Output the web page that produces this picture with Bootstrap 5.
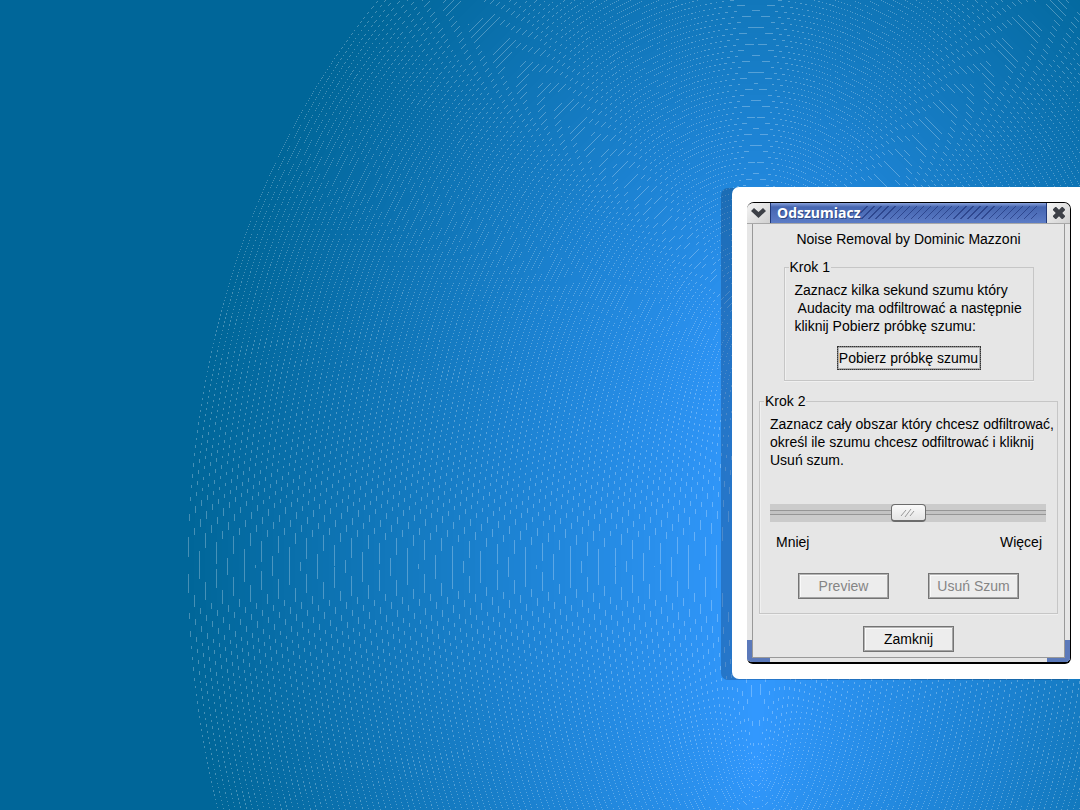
<!DOCTYPE html>
<html lang="pl">
<head>
<meta charset="utf-8">
<meta name="viewport" content="width=device-width, initial-scale=1">
<title>Odszumiacz</title>
<link href="https://cdn.jsdelivr.net/npm/bootstrap@5.3.0/dist/css/bootstrap.min.css" rel="stylesheet">
<style>
body{background:#069;color:#000;font:14px/18px "Liberation Sans",Arial,sans-serif}
.backdrop{z-index:-1}
.sheet{width:348px;margin-top:187px;padding:15px 9px 15px 15px;background:#fff;border-radius:7px 0 0 7px;box-shadow:-11px 1px 0 rgba(15,45,90,.3)}
.dialog{background:#e6e6e6;border:solid #000;border-width:1px 1px 2px 0;border-radius:7px 7px 6px 6px;overflow:hidden}
.titlebar{height:21px;border-bottom:1px solid #a8a8a8}
.titlebar h1{margin:0;padding-left:6px;color:#fff;font:bold 14px/20px "Open Sans","Noto Sans",sans-serif;text-shadow:1px 1px 0 #2c4680;border:solid #203878;border-width:0 1px;
 background:repeating-linear-gradient(135deg,transparent 0 4px,rgba(25,45,115,.6) 4px 5px) 90px 3px/176px 13px no-repeat,linear-gradient(#8aa3dc 0,#4565b0 4px,#5c7cc6)}
.wm-btn{width:23px;padding:0;border:0;background:linear-gradient(135deg,#f4f4f4,#d0d0d0)}
.frame{padding:0 5px 4px;background:
 linear-gradient(#5b79ba,#5b79ba) left bottom/23px 4px no-repeat,
 linear-gradient(#5b79ba,#5b79ba) right bottom/23px 4px no-repeat,
 linear-gradient(#5b79ba,#5b79ba) left bottom/5px 22px no-repeat,
 linear-gradient(#5b79ba,#5b79ba) right bottom/5px 22px no-repeat,#e6e6e6}
.pane{padding:6px 0 5px;background:#e6e6e6;border:solid #999;border-width:0 1px 1px}
.group{border:1px solid #c6c6c6;box-shadow:inset 1px 0 #f0f0f0,0 1px #f0f0f0}
.group legend{float:none;width:auto;margin:0 0 0 -6px;padding:0 1px;font-size:14px;line-height:18px}
.step1{width:250px;margin-top:10px;padding:5px 10px 10px}
.step2{width:299px;margin-top:11px;padding:5px 10px 14px}
.msg{white-space:pre;margin:0}
.push{width:91px;height:26px;padding:0;border:1px solid #747474;background:#ededed;color:#000;font-size:14px;line-height:18px;box-shadow:inset 1px 1px #b4b4b4,inset -1px -1px #a4a4a4,inset 2px 2px #fafafa}
.push:disabled{color:#858585}
.sample{width:144px;height:24px;margin-top:11px;background:#e8e8e8;box-shadow:inset 0 0 0 1px #b0b0b0;outline:1px dotted #333;outline-offset:-1px}
.level{appearance:none;display:block;width:276px;height:18px;margin:35px 0 0;background:linear-gradient(#cbcbcb 0 6px,#969696 6px 7px,#c3c3c3 7px 10px,#969696 10px 11px,#cbcbcb 11px)}
.level::-webkit-slider-thumb{appearance:none;width:35px;height:18px;border:1px solid #6c6c6c;border-bottom-width:2px;border-radius:4px;
 background:url("data:image/svg+xml,%3Csvg xmlns='http://www.w3.org/2000/svg' width='16' height='10'%3E%3Cpath d='M1 8l5-6M5 9l6-8M10 8l4-5' stroke='%23999' fill='none'/%3E%3C/svg%3E") center no-repeat,linear-gradient(#fafafa,#e4e4e4)}
.ends{margin-top:11px;padding:0 5px 0 6px}
.actions{margin-top:22px;padding:0 28px}
.closing{margin-top:12px}
</style>
</head>
<body class="min-vh-100 overflow-hidden">
<svg class="backdrop position-fixed top-0 start-0 w-100 h-100" viewBox="0 0 1080 810" preserveAspectRatio="xMaxYMid slice" aria-hidden="true" id="rings"></svg>
<main class="d-flex justify-content-end">
<div class="sheet">
<section class="dialog" aria-labelledby="title">
<header class="titlebar d-flex">
<button class="wm-btn d-flex align-items-center justify-content-center" type="button" aria-label="Menu"><svg width="15" height="11" viewBox="0 0 15 11"><path d="M0 3L3 0l4.500 4L12 0l3 3-7.500 7z" fill="#3d4047"/></svg></button>
<h1 class="flex-grow-1" id="title">Odszumiacz</h1>
<button class="wm-btn d-flex align-items-center justify-content-center" type="button" aria-label="Zamknij okno"><svg width="12" height="12" viewBox="0 0 13 13"><path d="M0 2.500L2.500 0h1L6.500 3 9.500 0h1L13 2.500v1L10 6.500l3 3v1L10.500 13h-1l-3-3-3 3h-1L0 10.500v-1l3-3-3-3z" fill="#3d4047"/></svg></button>
</header>
<div class="frame">
<form class="pane d-flex flex-column align-items-center">
<p class="m-0">Noise Removal by Dominic Mazzoni</p>
<fieldset class="group step1">
<legend>Krok 1</legend>
<p class="msg">Zaznacz kilka sekund szumu który
 Audacity ma odfiltrować a następnie
kliknij Pobierz próbkę szumu:</p>
<button class="push sample d-block mx-auto mb-0" type="button">Pobierz próbkę szumu</button>
</fieldset>
<fieldset class="group step2">
<legend>Krok 2</legend>
<label class="msg d-block" for="level">Zaznacz cały obszar który chcesz odfiltrować,
określ ile szumu chcesz odfiltrować i kliknij
Usuń szum.</label>
<input class="level" type="range" id="level" min="0" max="100" value="50">
<div class="ends d-flex justify-content-between"><span>Mniej</span><span>Więcej</span></div>
<div class="actions d-flex justify-content-between">
<button class="push" type="button" disabled>Preview</button>
<button class="push" type="button" disabled>Usuń Szum</button>
</div>
</fieldset>
<button class="push closing" type="button">Zamknij</button>
</form>
</div>
</section>
</div>
</main>
<script>
// Nested ellipses, each one step lighter. A pale ellipse shows past the edge of
// each by a fraction of a pixel, which breaks into dashes without antialiasing.
const rings = document.getElementById('rings'), steps = 101, gap = 5.62, rim = 0.33;
const mix = (a, b, t) => Math.round(a + (b - a) * t);
const ellipse = (rx, ry, c) => `<ellipse cx="756" cy="567" rx="${rx}" ry="${ry}" shape-rendering="crispEdges" fill="rgb(${c})"/>`;
let out = '';
for (let k = steps; k > 0; k--) {
  const t = 1 - k / steps, rx = k * gap, ry = 191 + k * gap;
  const c = [mix(0, 51, t), mix(102, 153, t), mix(153, 255, t)];
  out += ellipse(rx + rim, ry + rim, c.map(v => mix(v, 255, 0.27))) + ellipse(rx, ry, c);
}
rings.innerHTML = out;
</script>
<script src="https://cdn.jsdelivr.net/npm/bootstrap@5.3.0/dist/js/bootstrap.bundle.min.js"></script>
</body>
</html>
